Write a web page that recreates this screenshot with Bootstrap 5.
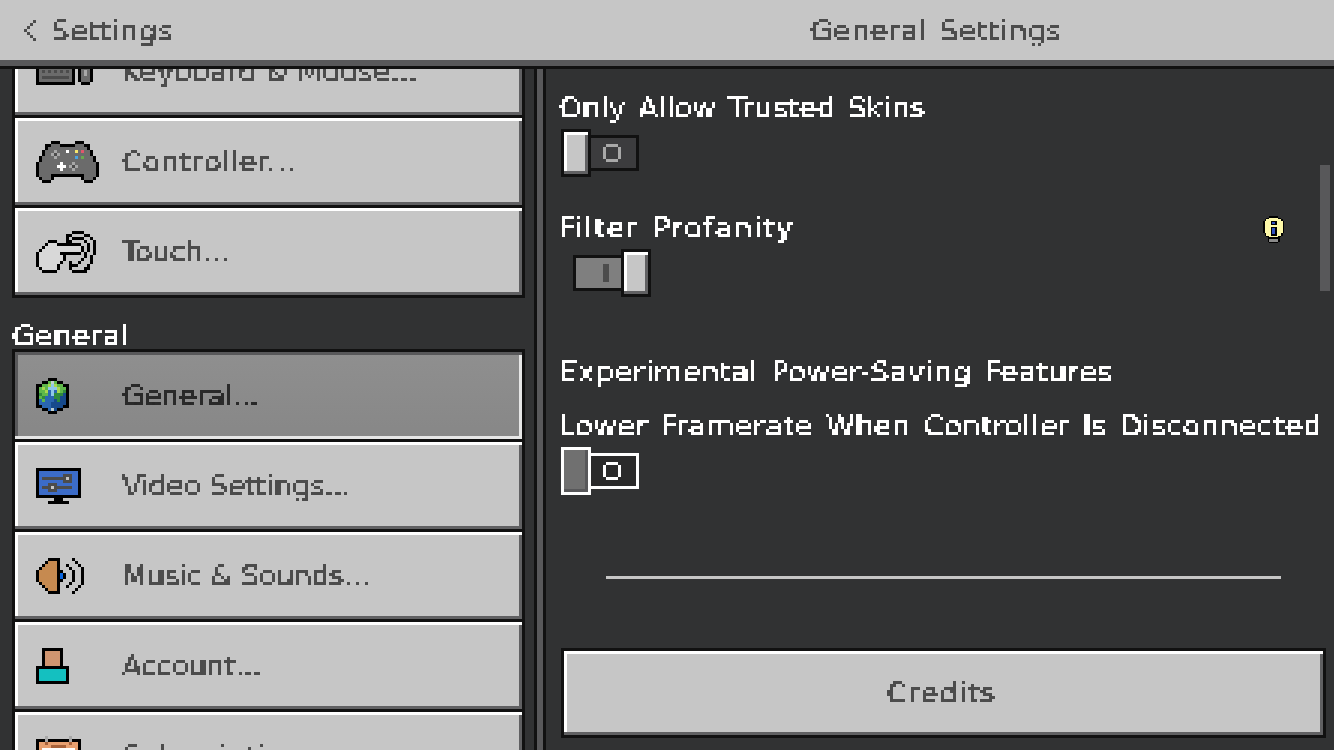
<!DOCTYPE html>
<html lang="en">
<head>
    <meta charset="UTF-8">
    <meta name="viewport" content="width=device-width, initial-scale=1.0">
    <title>General Settings</title>
    <link href="https://cdn.jsdelivr.net/npm/bootstrap@5.3.0/dist/css/bootstrap.min.css" rel="stylesheet">
    <style>
        html, body { height: 750px; overflow: hidden; }
        body {
            background: #313233;
            font-family: "DejaVu Sans", "Liberation Sans", sans-serif;
            font-size: 29px;
            line-height: 36px;
            word-spacing: 3px;
            color: #fff;
        }
        .pxt {
            display: inline-block;
            white-space: nowrap;
            padding: 0 3px;
            margin: 0 -3px;
            filter: url(#pixelate);
        }
        /* tracking per label, the game font has its own widths */
        .sp-a { letter-spacing: .4px; }
        .sp-b { letter-spacing: .5px; }
        .sp-c { letter-spacing: .1px; }
        .sp-d { letter-spacing: 1.4px; }
        .sp-e { letter-spacing: 1px; }
        .sp-f { letter-spacing: -.2px; }
        .sp-g { letter-spacing: -.4px; }
        .sp-h { letter-spacing: -.5px; }
        .sp-i { letter-spacing: -.6px; }

        .art { display: block; shape-rendering: crispEdges; flex: none; }

        .top-bar {
            height: 69px;
            background: #c6c6c6;
            color: #4c4c4c;
            border-bottom: 3px solid #111;
            box-shadow: inset 0 -6px 0 #58585a;
            padding-bottom: 5px;
        }
        .back-part { width: 540px; padding-left: 24px; gap: 15px; }
        .title-part { padding-right: 2px; }

        .work-area { height: 681px; }
        .side-pane { width: 534px; padding: 0 9px 0 12px; overflow: hidden; }
        .pane-split { width: 12px; background: #58585a; border-left: 3px solid #111; border-right: 3px solid #111; }
        .main-pane { width: 788px; padding: 20px 0 0 15px; }

        .btn-stack { background: #111; padding: 3px; gap: 3px; }
        .btn-stack.scrolled { margin-top: -44px; }
        .section-name { height: 51px; padding-top: 20px; }

        .mc-btn {
            --bs-btn-border-width: 0;
            --bs-btn-border-radius: 0;
            --bs-btn-padding-x: 0;
            --bs-btn-padding-y: 0;
            --bs-btn-font-size: 29px;
            --bs-btn-line-height: 36px;
            --bs-btn-font-family: "DejaVu Sans", "Liberation Sans", sans-serif;
            --bs-btn-color: #4c4c4c;
            --bs-btn-bg: #c6c6c6;
            --bs-btn-hover-color: #4c4c4c;
            --bs-btn-hover-bg: #c6c6c6;
            height: 87px;
            box-shadow: inset 0 -3px 0 #606062, inset 0 3px 0 #fff, inset 3px 0 0 #fff, inset -3px 0 0 #606062;
        }
        .mc-btn.picked {
            --bs-btn-color: #2a2a2a;
            --bs-btn-bg: #8b8b8b;
            --bs-btn-hover-color: #2a2a2a;
            --bs-btn-hover-bg: #8b8b8b;
            background-image: linear-gradient(#8f8f8f, #878787);
            box-shadow: inset 0 3px 0 #58585a, inset 0 -3px 0 #e6e6e6, inset 3px 0 0 #58585a, inset -3px 0 0 #e6e6e6;
        }
        .icon-slot { width: 107px; padding-left: 21px; flex: none; }

        .opt-line { height: 36px; padding-top: 1px; margin-left: -2px; }
        .opt-gap-a { margin-top: 32px; }
        .opt-gap-b { margin-top: 56px; }
        .opt-gap-c { margin-top: 18px; }
        .bulb-line { padding-right: 50px; }
        .bulb-line .art { margin-top: 6px; }

        .tgl { margin-top: 4px; height: 48px; }
        .tgl-knob {
            width: 30px; height: 48px;
            background: #c6c6c6;
            border: 3px solid #111;
            box-shadow: inset 0 -3px 0 #606062, inset 0 3px 0 #fff, inset 3px 0 0 #fff, inset -3px 0 0 #606062;
        }
        .tgl-track { width: 48px; height: 36px; border: 3px solid #111; border-left-width: 0; }
        .tgl-off .tgl-track { background: #3c3c3e; color: #a8a8a8; padding-left: 12px; }
        .tgl-on { padding-left: 12px; }
        .tgl-on .tgl-track { background: #7f7f7f; border-left-width: 3px; border-right-width: 0; padding-left: 27px; }
        .tgl-mark { width: 6px; height: 18px; background: #4c4c4c; }
        .tgl-focus .tgl-knob {
            background: #707070;
            border-color: #fff;
            box-shadow: inset 0 -3px 0 #58585a, inset -3px 0 0 #58585a;
        }
        .tgl-focus .tgl-track { background: #2a2a2a; border-color: #fff; color: #fff; }

        .rule-line { height: 3px; background: #c6c6c6; margin: 81px 53px 0 45px; }
        .credits-wrap { margin: 69px 8px 0 0; border: 3px solid #111; }
        .credits-wrap .mc-btn { height: 84px; padding-right: 4px; }

        .scroll-thumb { position: absolute; left: 1320px; top: 165px; width: 10px; height: 126px; background: #58585a; }
    </style>
</head>
<body>
    <svg width="0" height="0" class="position-absolute">
        <filter id="pixelate" x="0" y="-20%" width="100%" height="140%" color-interpolation-filters="sRGB">
            <feFlood x="1" y="1" width="1" height="1"/>
            <feComposite width="3" height="3"/>
            <feTile result="grid"/>
            <feComposite in="SourceGraphic" in2="grid" operator="in"/>
            <feMorphology operator="dilate" radius="1"/>
            <feComponentTransfer>
                <feFuncA type="discrete" tableValues="0 1 1 1"/>
            </feComponentTransfer>
        </filter>
    </svg>

    <header class="top-bar d-flex align-items-center">
        <div class="back-part d-flex align-items-center">
            <svg class="art" data-art="chevron"></svg>
            <span class="pxt sp-a">Settings</span>
        </div>
        <div class="title-part flex-fill text-center"><span class="pxt sp-a">General Settings</span></div>
    </header>

    <div class="work-area d-flex">
        <nav class="side-pane">
            <div class="btn-stack scrolled d-flex flex-column">
                <button class="btn mc-btn d-flex align-items-center text-start"><span class="icon-slot"><svg class="art" data-art="keyboard"></svg></span><span class="pxt sp-f">Keyboard &amp; Mouse...</span></button>
                <button class="btn mc-btn d-flex align-items-center text-start"><span class="icon-slot"><svg class="art" data-art="pad"></svg></span><span class="pxt sp-b">Controller...</span></button>
                <button class="btn mc-btn d-flex align-items-center text-start"><span class="icon-slot"><svg class="art" data-art="touch"></svg></span><span class="pxt sp-g">Touch...</span></button>
            </div>
            <div class="section-name d-flex align-items-start"><span class="pxt sp-a">General</span></div>
            <div class="btn-stack d-flex flex-column">
                <button class="btn mc-btn picked d-flex align-items-center text-start"><span class="icon-slot"><svg class="art" data-art="globe"></svg></span><span class="pxt sp-i">General...</span></button>
                <button class="btn mc-btn d-flex align-items-center text-start"><span class="icon-slot"><svg class="art" data-art="monitor"></svg></span><span class="pxt sp-h">Video Settings...</span></button>
                <button class="btn mc-btn d-flex align-items-center text-start"><span class="icon-slot"><svg class="art" data-art="speaker"></svg></span><span class="pxt sp-i">Music &amp; Sounds...</span></button>
                <button class="btn mc-btn d-flex align-items-center text-start"><span class="icon-slot"><svg class="art" data-art="person"></svg></span><span class="pxt sp-i">Account...</span></button>
                <button class="btn mc-btn d-flex align-items-center text-start"><span class="icon-slot"><svg class="art" data-art="calendar"></svg></span><span class="pxt sp-f">Subscriptions...</span></button>
            </div>
        </nav>

        <div class="pane-split"></div>

        <main class="main-pane">
            <div class="opt-line"><span class="pxt sp-c">Only Allow Trusted Skins</span></div>
            <div class="tgl tgl-off d-flex align-items-center">
                <div class="tgl-knob"></div>
                <div class="tgl-track d-flex align-items-center"><svg class="art" data-art="ring"></svg></div>
            </div>

            <div class="opt-line opt-gap-a bulb-line d-flex justify-content-between align-items-start">
                <span class="pxt sp-d">Filter Profanity</span>
                <svg class="art" data-art="bulb"></svg>
            </div>
            <div class="tgl tgl-on d-flex align-items-center">
                <div class="tgl-track d-flex align-items-center"><div class="tgl-mark"></div></div>
                <div class="tgl-knob"></div>
            </div>

            <div class="opt-line opt-gap-b"><span class="pxt sp-b">Experimental Power-Saving Features</span></div>
            <div class="opt-line opt-gap-c"><span class="pxt sp-a">Lower Framerate When Controller Is Disconnected</span></div>
            <div class="tgl tgl-off tgl-focus d-flex align-items-center">
                <div class="tgl-knob"></div>
                <div class="tgl-track d-flex align-items-center"><svg class="art" data-art="ring"></svg></div>
            </div>

            <div class="rule-line"></div>

            <div class="credits-wrap">
                <button class="btn mc-btn w-100 d-flex align-items-center justify-content-center"><span class="pxt sp-e">Credits</span></button>
            </div>
        </main>
    </div>

    <div class="scroll-thumb"></div>

    <script>
        // pixel art icons, one char per block, run-merged into rects
        const colours = {
            X: '#000', C: 'currentColor', g: '#6b6b6b', d: '#4c4c4c', L: '#a8a8a8', W: '#fff',
            Y: '#f5e66e', R: '#e0566c', B: '#4aa3e0', G: '#6aa84f', w: '#d8d8d8',
            h: '#5fb84a', j: '#2f8a3c', b: '#2a66b0', k: '#174a8c', c: '#8fc8e8', y: '#a8d84f', s: '#c0d0d0',
            m: '#3c6cc8', l: '#c6c6c6', o: '#c68a50', n: '#a8623a',
            p: '#d09570', t: '#14c0c0', e: '#e8a070', u: '#fdf8a8', v: '#3050c0', q: '#8a8a8a', z: '#0a66e0'
        };
        const art = {
            chevron: { size: 3, ink: '#4c4c4c', rows: ['...C', '..C.', '.C..', 'C...', '.C..', '..C.', '...C'] },
            ring: { size: 3, rows: ['.CCCC.', 'C....C', 'C....C', 'C....C', 'C....C', '.CCCC.'] },
            keyboard: { size: 3, rows: [
                'XXXXXXXXXXXXX..XXX.',
                'XgggggggggggX.XgggX',
                'XgdgdgdgdgdgX.XgLgX',
                'XgggggggggggX.XgggX',
                'XgdgdgdgdgdgX.XgLgX',
                'XgggggggggggX.XgLgX',
                'XgdddddddddgX.XgggX',
                'XgggggggggggX.XgggX',
                'XXXXXXXXXXXXX..XXX.'] },
            pad: { size: 3, rows: [
                '.....XXX.....XXX.....',
                '...XXgggXXXXXgggXX...',
                '...XgggggggggggggX...',
                '..XgggLgggWggYgRggX..',
                '..XggLdLggggggggggX..',
                '.XggggLggggggBgGgggX.',
                '.XgggggggggggggggggX.',
                'XgggggggWgggLgggggggX',
                'XggggggWWWgLdLggggggX',
                'XgggggggWgggLgggggggX',
                'XgggggggggggggggggggX',
                'XggggXXXXXXXXXXXggggX',
                '.XgggX.........XgggX.',
                '..XXX...........XXX..'] },
            touch: { size: 3, rows: [
                '............XXXX....',
                '..........XX....XX..',
                '..........X.XXXX..X.',
                '....XXX...XX....X..X',
                '...XwwwXXXXXXXX..X.X',
                '..XwwwwwwwwwwwwX.X.X',
                '.XwwwwwwwwwwwwwX.X.X',
                'XwwwwwwwXXXXXXX.X..X',
                'XwwwwwwwwX......X.X.',
                'XwwwwwwwwX.....X..X.',
                'XwwwwwwwX..X..X...X.',
                'XwwwwwwX...XXX...X..',
                '.XwwwwwX...X....XX..',
                '..XXXXX.....XXXXX...'] },
            globe: { size: 3, rows: [
                '....XXX....',
                '..XXhshXX..',
                'XXhhycyhhXX',
                'XhyhcccyhhX',
                'XhhybcbyhjX',
                'XjhhbcjjjkX',
                'XhjbbbjjkkX',
                'XbhbbbkjkkX',
                'XbbbbkkkkkX',
                'XXbbbkkkkXX',
                '..XXbskXX..',
                '....XXX....'] },
            monitor: { size: 3, rows: [
                'XXXXXXXXXXXXXXX',
                'XmmmmmmmmmmmmmX',
                'XmmmmmmmmdddmmX',
                'XmddddddddldmmX',
                'XmmmmmmmmdddmmX',
                'XmmmdddmmmmmmmX',
                'XmdddlddddddmmX',
                'XmmmdddmmmmmmmX',
                'XmmmmmmmmmmmmmX',
                'XXXXXXXXXXXXXXX',
                '......XXX......',
                '....XXXXXXX....'] },
            speaker: { size: 3, rows: [
                '....XXXX....X...',
                '...XoooX.....X..',
                '..XooooX..X...X.',
                '.XoooooX...X...X',
                'XooooooXX...X..X',
                'XooooooXzX..X..X',
                'XooooooXzX..X..X',
                'XooooooXX...X..X',
                '.XoooooX...X...X',
                '..XooooX..X...X.',
                '...XoooX.....X..',
                '....XXXX....X...'] },
            person: { size: 3, rows: [
                '..XXXXXXX..',
                '..XpppppX..',
                '..XpppppX..',
                '..XpppppX..',
                '..XpppppX..',
                '..XpppppX..',
                'XXXXXXXXXXX',
                'XtttttttttX',
                'XtttttttttX',
                'XtttttttttX',
                'XtttttttttX',
                'XXXXXXXXXXX'] },
            calendar: { size: 3, rows: [
                '...L.......L...',
                'XXXLXXXXXXXLXXX',
                'XeeneeeeeeeneeX',
                'XeeeennnnneeeeX',
                'XeWWWWWWWWWWWeX',
                'XeWWWWWWWWWWWeX',
                'XeWWWWWWWWWWWeX',
                'XeWWWWWWWWWWWeX',
                'XeWWWWWWWWWWWeX',
                'XeWWWWWWWWWWWeX',
                'XeWWWWWWWWWWWeX',
                'XeeeeeeeeeeeeeX',
                'XXXXXXXXXXXXXXX'] },
            bulb: { size: 1.5, rows: [
                '....XXXXXX....',
                '..XXuuuuuuXX..',
                '.XuuuuuuuuuuX.',
                'XuuuuXXXXuuuuX',
                'XuuuuXvvXuuuuX',
                'XuuuuXXXXuuuuX',
                'XuuuuuuuuuuuuX',
                'XuuuuXXXXuuuuX',
                'XuuuuXvvXuuuuX',
                'XuuuuXvvXuuuuX',
                'XuuuuXvvXuuuuX',
                '.XuuuXvvXuuuX.',
                '.XuuuXXXXuuuX.',
                '..XXuuuuuuXX..',
                '...XXXXXXXX...',
                '...XqqqqqqX...',
                '...XqqqqqqX...',
                '....XXXXXX....'] }
        };

        document.querySelectorAll('svg[data-art]').forEach(svg => {
            const item = art[svg.dataset.art];
            const wide = item.rows[0].length, tall = item.rows.length;
            svg.setAttribute('viewBox', `0 0 ${wide} ${tall}`);
            svg.setAttribute('width', wide * item.size);
            svg.setAttribute('height', tall * item.size);
            if (item.ink) svg.style.color = item.ink;
            let rects = '';
            item.rows.forEach((row, y) => {
                for (let x = 0; x < row.length; x++) {
                    const ch = row[x];
                    if (ch === '.') continue;
                    let end = x;
                    while (row[end + 1] === ch) end++;
                    rects += `<rect x="${x}" y="${y}" width="${end - x + 1}" height="1" fill="${colours[ch]}"/>`;
                    x = end;
                }
            });
            svg.innerHTML = rects;
        });
    </script>
    <script src="https://cdn.jsdelivr.net/npm/bootstrap@5.3.0/dist/js/bootstrap.bundle.min.js"></script>
</body>
</html>
